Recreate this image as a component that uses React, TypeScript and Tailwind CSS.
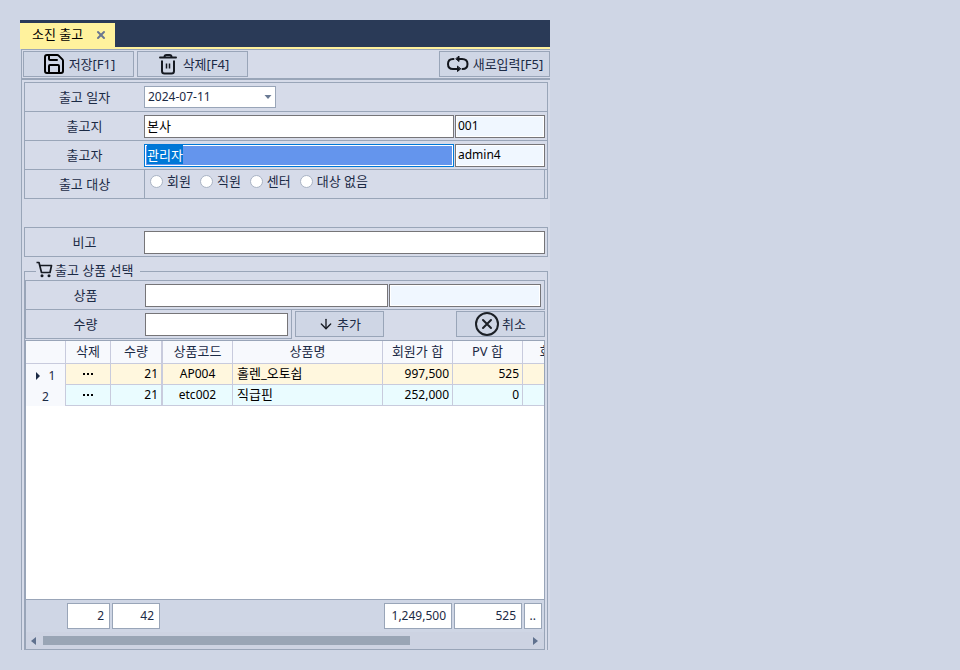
import { useEffect, useRef } from "react";
import type { ReactNode } from "react";
import { ArrowDown, Save, X } from "lucide-react";

const line = "border-[#99a5b8]";
const field =
  "h-[23px] w-full min-w-0 border border-[#767578] bg-white px-0.5 pb-0.5 leading-4 text-black outline-none";
const readOnlyField =
  "h-[23px] min-w-0 shrink-0 border border-[#767578] bg-[#f0f7ff] px-0.5 pb-0.5 text-[12px] leading-4 text-black outline-none shadow-[inset_0_0_0_1px_white]";

function TrashIcon() {
  return (
    <svg width="24" height="24" viewBox="0 0 24 24" fill="none" stroke="#161a22" strokeWidth="2">
      <path d="M4 5.500h16" strokeLinecap="round" />
      <path d="M8.500 5Q8.500 3 10.500 3h3q2 0 2 2" />
      <path d="M6 8.500V19q0 2.500 2.500 2.500h7Q18 21.500 18 19V8.500" strokeWidth="2" />
      <path d="M10.500 11.500v5M13.500 11.500v5" strokeWidth="1.500" />
    </svg>
  );
}

function RepeatIcon() {
  return (
    <svg width="24" height="24" viewBox="0 0 24 24" fill="none" stroke="#12151c" strokeWidth="2" strokeLinecap="round">
      <path d="M7.500 7H7Q2 7 2 12t5 5h5" />
      <path d="M16.500 17q5 0 5-5T16 7h-4" />
      <path d="M13 4.500v5L10 7zM11.500 14.500v5l3-2.500z" fill="#12151c" strokeWidth="1" strokeLinejoin="round" />
    </svg>
  );
}

function CartIcon() {
  return (
    <svg width="17" height="17" viewBox="0 0 17 17" fill="none" stroke="#161a22" strokeWidth="1.700" strokeLinejoin="round">
      <path d="M0.500 1.500h2.500l2.500 10h8.500l1.500-7H4" />
      <circle cx="6" cy="14.800" r="1.500" fill="#161a22" stroke="none" />
      <circle cx="13" cy="14.800" r="1.500" fill="#161a22" stroke="none" />
    </svg>
  );
}

function CircleCloseIcon() {
  return (
    <svg width="24" height="24" viewBox="0 0 24 24" fill="none" stroke="#1c2026" strokeWidth="2" strokeLinecap="round">
      <circle cx="12" cy="12" r="11" />
      <path d="M8 8l8 8M16 8l-8 8" />
    </svg>
  );
}

function ToolButton({ icon, children, width }: { icon: ReactNode; children: ReactNode; width: string }) {
  return (
    <button
      type="button"
      className={`flex h-[26px] ${width} items-center justify-center gap-[3px] whitespace-nowrap border border-[#99a5b8] bg-[#cfd6e5]`}
    >
      {icon}
      <span>{children}</span>
    </button>
  );
}

function FormRow({ label, htmlFor, children }: { label: string; htmlFor: string; children: ReactNode }) {
  return (
    <div className={`flex h-[29px] border-t ${line}`}>
      <label htmlFor={htmlFor} className="flex w-[119px] shrink-0 items-center justify-center">
        {label}
      </label>
      <div className="flex min-w-0 flex-1 gap-px pt-[3px] pr-0.5">{children}</div>
    </div>
  );
}

const rows = [
  { no: 1, qty: "21", code: "AP004", name: "홀렌_오토쉽", price: "997,500", pv: "525", tone: "bg-[#fff7de]" },
  { no: 2, qty: "21", code: "etc002", name: "직급핀", price: "252,000", pv: "0", tone: "bg-[#eafcff]" },
];

const targets = ["회원", "직원", "센터", "대상 없음"];
const cell = "h-[21px] border-b border-r border-[#c8cbdd] p-0 leading-4 font-normal";
const head = "h-[23px] border-b border-r border-[#c8cbdd] p-0 font-normal pb-0.5";
const total =
  "flex h-[26px] shrink-0 items-center justify-end border border-[#99a5b8] bg-white px-[5px] text-[12px] leading-4";

export default function App() {
  const senderRef = useRef<HTMLInputElement>(null);

  useEffect(() => {
    senderRef.current?.focus();
    senderRef.current?.select();
  }, []);

  return (
    <main className="flex min-h-screen flex-col bg-[#cfd6e5] p-5 font-['Noto_Sans','Noto_Sans_CJK_KR',sans-serif] text-[13px] leading-4 text-[#1b2a45]">
      <div className="flex w-full max-w-[530px] flex-1 flex-col">
        <header className="flex h-[29px] items-end border-b-2 border-[#fff29d] bg-[#2a3a57]">
          <div className="flex h-6 w-[95px] items-center bg-[#fff29d] pl-3 text-black">
            <span className="flex-1 whitespace-nowrap pb-0.5">소진 출고</span>
            <button type="button" aria-label="닫기" className="mr-2">
              <X size={12} strokeWidth={4} className="text-[#6b7690]" />
            </button>
          </div>
        </header>

        <div className={`ml-px flex flex-1 flex-col border-t border-l ${line} bg-[#d6dbe9]`}>
          <div className={`flex items-center gap-[3px] border-b-2 ${line} py-px pl-px`}>
            <ToolButton width="w-[111px]" icon={<Save size={24} className="text-black" />}>
              저장[F1]
            </ToolButton>
            <ToolButton width="w-[111px]" icon={<TrashIcon />}>
              삭제[F4]
            </ToolButton>
            <div className="flex-1" />
            <ToolButton width="w-[111px]" icon={<RepeatIcon />}>
              새로입력[F5]
            </ToolButton>
          </div>

          <div className="flex flex-1 flex-col px-0.5 pt-0.5">
            <section className={`border-x border-b ${line}`}>
              <FormRow label="출고 일자" htmlFor="date">
                <div className="relative h-[22px] w-[132px]">
                  <select
                    id="date"
                    className="h-full w-full appearance-none border border-[#99a5b8] bg-white px-[3px] text-[12px] leading-4 outline-none"
                  >
                    <option>2024-07-11</option>
                  </select>
                  <svg className="pointer-events-none absolute top-[9px] right-1" width="8" height="5" viewBox="0 0 8 5">
                    <path d="M0.500 0h7L4 4z" fill="#6a7a94" />
                  </svg>
                </div>
              </FormRow>
              <FormRow label="출고지" htmlFor="place">
                <input id="place" defaultValue="본사" className={field} />
                <input aria-label="출고지 코드" readOnly value="001" className={`${readOnlyField} w-[90px]`} />
              </FormRow>
              <FormRow label="출고자" htmlFor="sender">
                <input
                  id="sender"
                  ref={senderRef}
                  defaultValue="관리자"
                  className="h-[23px] w-full min-w-0 border border-[#0078d7] bg-[#6495ed] px-0.5 pb-0.5 leading-4 text-white shadow-[inset_0_0_0_1px_white] outline-none selection:bg-[#0078d7] selection:text-white"
                />
                <input aria-label="출고자 아이디" readOnly value="admin4" className={`${readOnlyField} w-[90px]`} />
              </FormRow>
              <fieldset className={`flex h-[29px] min-w-0 border-t ${line}`}>
                <div className="flex w-[119px] shrink-0 items-center justify-center">출고 대상</div>
                <div className={`mr-0.5 flex flex-1 items-center gap-[9px] border-x pb-1.5 pl-[5px] ${line}`}>
                  {targets.map((t) => (
                    <label key={t} className="flex items-center gap-1 whitespace-nowrap">
                      <input
                        type="radio"
                        name="target"
                        className="size-[13px] appearance-none rounded-full border border-[#a9b3c4] bg-white"
                      />
                      {t}
                    </label>
                  ))}
                </div>
              </fieldset>
            </section>

            <section className={`mt-7 border-x border-b ${line}`}>
              <FormRow label="비고" htmlFor="memo">
                <input id="memo" className={field} />
              </FormRow>
            </section>

            <section className={`mt-[14px] flex min-w-0 flex-1 flex-col border-x border-t pr-0.5 ${line}`}>
              <h2 className="-mt-[11px] ml-[11px] flex h-[19px] w-fit items-center gap-0.5 bg-[#d6dbe9] pr-[6px] pb-0.5">
                <CartIcon />
                <span>출고 상품 선택</span>
              </h2>

              <div className={`border-l ${line}`}>
                <div className={`flex h-[29px] border-t border-r ${line}`}>
                  <label htmlFor="product" className="flex w-[119px] shrink-0 items-center justify-center">
                    상품
                  </label>
                  <div className="flex min-w-0 flex-1 gap-px pt-[3px] pr-[3px]">
                    <input id="product" className={field} />
                    <input aria-label="상품 이름" readOnly className={`${readOnlyField} w-[152px]`} />
                  </div>
                </div>
                <div className={`flex h-[30px] border-t ${line}`}>
                  <div className={`flex w-[266px] border-r border-b ${line}`}>
                    <label htmlFor="qty" className="flex w-[119px] shrink-0 items-center justify-center">
                      수량
                    </label>
                    <div className="flex min-w-0 flex-1 pt-[3px] pr-[3px]">
                      <input id="qty" className={field} />
                    </div>
                  </div>
                  <div className="flex flex-1 justify-between pt-px pl-[3px]">
                    <ToolButton width="w-[89px]" icon={<ArrowDown size={16} className="text-[#161a22]" />}>
                      추가
                    </ToolButton>
                    <ToolButton width="w-[89px]" icon={<CircleCloseIcon />}>
                      취소
                    </ToolButton>
                  </div>
                </div>
              </div>

              <div className={`mt-px flex flex-1 flex-col border ${line} bg-white`}>
                <div className="overflow-hidden">
                  <table className="w-[567px] table-fixed border-separate border-spacing-0">
                    <colgroup>
                      <col className="w-[40px]" />
                      <col className="w-[45px]" />
                      <col className="w-[52px]" />
                      <col className="w-[70px]" />
                      <col className="w-[150px]" />
                      <col className="w-[70px]" />
                      <col className="w-[70px]" />
                      <col className="w-[70px]" />
                    </colgroup>
                    <thead className="bg-[#f7f9fd]">
                      <tr>
                        <th className={head} />
                        <th className={head}>삭제</th>
                        <th className={`${head} border-r-2`}>수량</th>
                        <th className={head}>상품코드</th>
                        <th className={head}>상품명</th>
                        <th className={head}>회원가 합</th>
                        <th className={head}>PV 합</th>
                        <th className={head}>회원가</th>
                      </tr>
                    </thead>
                    <tbody className="text-black">
                      {rows.map((r) => (
                        <tr key={r.no} className={r.tone}>
                          <th className="h-[21px] border-r border-[#c8cbdd] bg-[#f7f9fd] p-0 text-[12px] leading-4 font-normal text-[#1b2a45]">
                            <div className="flex items-center justify-center gap-2 pt-0.5">
                              {r.no === 1 && (
                                <svg width="5" height="8" viewBox="0 0 5 8">
                                  <path d="M0 0l4 4-4 4z" fill="#1b2a45" />
                                </svg>
                              )}
                              {r.no}
                            </div>
                          </th>
                          <td className={cell}>
                            <button type="button" aria-label="행 삭제" className="flex w-full items-center justify-center gap-0.5">
                              <span className="size-0.5 bg-black" />
                              <span className="size-0.5 bg-black" />
                              <span className="size-0.5 bg-black" />
                            </button>
                          </td>
                          <td className={`${cell} border-r-2 pr-[3px] text-right text-[12px]`}>{r.qty}</td>
                          <td className={`${cell} text-center text-[12px]`}>{r.code}</td>
                          <td className={`${cell} pb-0.5 pl-1`}>{r.name}</td>
                          <td className={`${cell} pr-[3px] text-right text-[12px]`}>{r.price}</td>
                          <td className={`${cell} pr-[3px] text-right text-[12px]`}>{r.pv}</td>
                          <td className={cell} />
                        </tr>
                      ))}
                    </tbody>
                  </table>
                </div>
                <div className="flex-1" />
                <footer className={`flex h-[50px] flex-col border-t ${line} bg-[#cfd6e5] pt-[3px]`}>
                  <div className="flex gap-0.5 pr-0.5 pl-[41px]">
                    <output className={`${total} w-[43px]`}>2</output>
                    <output className={`${total} w-[48px]`}>42</output>
                    <div className="flex-1" />
                    <output className={`${total} w-[68px]`}>1,249,500</output>
                    <output className={`${total} w-[68px]`}>525</output>
                    <output className={`${total} w-[18px]`}>..</output>
                  </div>
                  <div className="mt-[3px] flex flex-1 items-center gap-[7px] bg-[#cdd3e2] pr-[6px] pl-[5px]">
                    <button type="button" aria-label="왼쪽으로">
                      <svg width="5" height="8" viewBox="0 0 5 8">
                        <path d="M5 0v8L0 4z" fill="#5f718e" />
                      </svg>
                    </button>
                    <div className="flex-1">
                      <div className="h-[9px] w-[76%] bg-[#99a5b5]" />
                    </div>
                    <button type="button" aria-label="오른쪽으로">
                      <svg width="5" height="8" viewBox="0 0 5 8">
                        <path d="M0 0v8l5-4z" fill="#5f718e" />
                      </svg>
                    </button>
                  </div>
                </footer>
              </div>
            </section>
          </div>
        </div>
      </div>
    </main>
  );
}
